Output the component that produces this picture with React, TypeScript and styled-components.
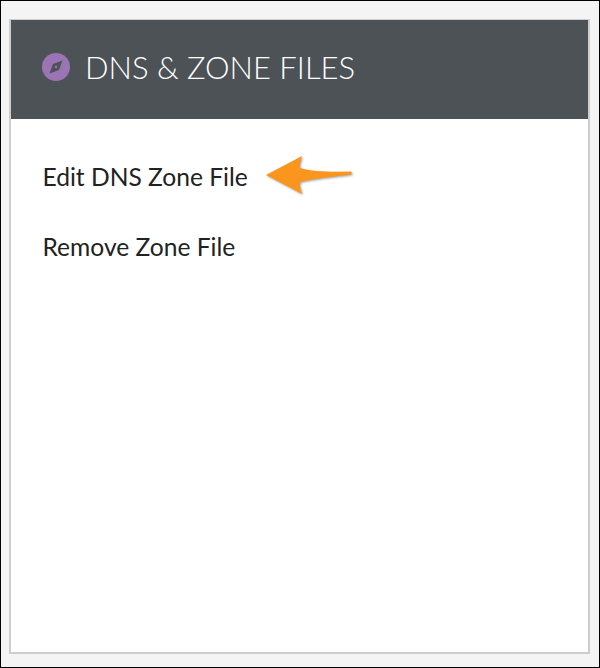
import styled, { createGlobalStyle } from "styled-components";

const GlobalStyle = createGlobalStyle`
  html, body {
    margin: 0;
    padding: 0;
  }
`;

const Screenshot = styled.div`
  box-sizing: border-box;
  width: 600px;
  height: 668px;
  padding: 18px 9px 13px 8px;
  background-color: #f4f4f4;
  border: 1px solid #000;
  font-family: "Lato", "Open Sans", sans-serif;
`;

const Panel = styled.section`
  box-sizing: border-box;
  height: 100%;
  display: flex;
  flex-direction: column;
  background-color: #fff;
  border: 2px solid #cdcdcd;
  border-top-width: 1px;
`;

const Header = styled.header`
  box-sizing: border-box;
  height: 99px;
  display: flex;
  align-items: center;
  gap: 15px;
  padding: 0 0 5px 31px;
  background-color: #4d5256;
`;

const Title = styled.h1`
  margin: 0;
  font-size: 31px;
  font-weight: 300;
  color: #fff;
`;

const Menu = styled.ul`
  margin: 0;
  padding: 44px 0 0 31.5px;
  list-style: none;
  display: flex;
  flex-direction: column;
  gap: 42px;
`;

const MenuItem = styled.li`
  position: relative;
  height: 28px;
  line-height: 28px;
  font-size: 24.6px;
  color: #222;
`;

const Pointer = styled.svg`
  position: absolute;
  left: 221px;
  top: -10px;
  filter: drop-shadow(1px 1px 1px rgba(0, 0, 0, 0.35));
`;

function CompassIcon() {
  return (
    <svg width="28" height="28" viewBox="0 0 28 28">
      <circle cx="14" cy="14" r="14" fill="#9b74b5" />
      <path d="M20.5 7.5 L17 17 L7.5 20.5 L11 11 Z" fill="#4d5256" />
      <circle cx="14" cy="14" r="1.2" fill="#9b74b5" />
    </svg>
  );
}

export default function App() {
  return (
    <>
      <GlobalStyle />
      <Screenshot>
        <Panel>
          <Header>
            <CompassIcon />
            <Title>DNS &amp; ZONE FILES</Title>
          </Header>
          <Menu>
            <MenuItem>
              Edit DNS Zone File
              <Pointer width="92" height="44" viewBox="0 0 92 44">
                <path
                  d="M2 22 L38 3 C37 8 35 12 36 15 C48 19 68 19 87 18.5 C88 20 88 21 87 21.5 C68 24 48 26 36 29 C35 33 37 37 38 41 Z"
                  fill="#fa961e"
                />
              </Pointer>
            </MenuItem>
            <MenuItem>Remove Zone File</MenuItem>
          </Menu>
        </Panel>
      </Screenshot>
    </>
  );
}
